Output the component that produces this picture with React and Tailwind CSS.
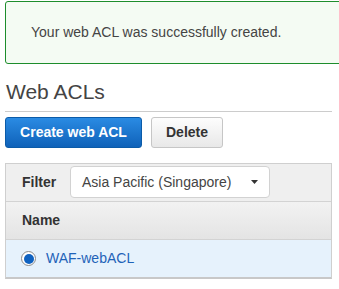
import React from 'react';

export default function App() {
  const font = { fontFamily: '"Liberation Sans", Arial, sans-serif' };

  return (
    <div className="w-[339px] h-[289px] overflow-hidden bg-white pl-[5px] pt-[1px]" style={font}>
      {/* Success flash */}
      <div className="w-[350px] h-[63px] border border-[#1d8d2c] rounded-[3px] bg-[#f4fbf3] flex items-center pl-[25px] pb-[1px]">
        <span className="text-[14px] text-[#444]">Your web ACL was successfully created.</span>
      </div>

      {/* Heading */}
      <div className="w-[327px] mt-[16px] border-b border-[#ccc] pb-[7px]">
        <h1 className="text-[21px] leading-[24px] text-[#444] pl-[1px]">Web ACLs</h1>
      </div>

      {/* Actions */}
      <div className="flex gap-[9px] mt-[5px]">
        <button className="w-[137px] h-[31px] rounded-[3px] border border-[#0b5ba8] bg-gradient-to-b from-[#2a8be3] to-[#0f62b9] text-white text-[14px] font-bold">
          Create web ACL
        </button>
        <button className="w-[72px] h-[31px] rounded-[3px] border border-[#c6c6c6] bg-gradient-to-b from-[#fdfdfd] to-[#e8e8e8] text-[#333] text-[14px] font-bold">
          Delete
        </button>
      </div>

      {/* Table */}
      <div className="w-[327px] mt-[15px] border border-[#cfcfcf] border-b-2 border-b-[#c8c8c8]">
        <div className="h-[38px] bg-[#efefef] border-b border-[#d3d3d3] flex items-center pl-[16px]">
          <span className="text-[14px] font-bold text-[#333] w-[48px]">Filter</span>
          <div className="w-[200px] h-[32px] bg-white border border-[#d2d2d2] rounded-[4px] flex items-center pl-[11px] pr-[11px] mb-[1px]">
            <span className="text-[14px] text-[#444] flex-1">Asia Pacific (Singapore)</span>
            <svg width="7" height="4" viewBox="0 0 7 4">
              <polygon points="0,0 7,0 3.5,4" fill="#333" />
            </svg>
          </div>
        </div>
        <div className="h-[38px] bg-gradient-to-b from-[#f2f2f2] to-[#e4e4e4] border-b border-[#d3d3d3] flex items-center pl-[16px]">
          <span className="text-[14px] font-bold text-[#333]">Name</span>
        </div>
        <div className="h-[37px] bg-[#e6f2fc] flex items-center pl-[15px]">
          <span className="w-[15px] h-[15px] rounded-full border border-[#8a8a8a] bg-white flex items-center justify-center">
            <span className="w-[10px] h-[10px] rounded-full bg-[#0f62c0]" />
          </span>
          <span className="ml-[10px] text-[14px] text-[#1f63b8]">WAF-webACL</span>
        </div>
      </div>
    </div>
  );
}
